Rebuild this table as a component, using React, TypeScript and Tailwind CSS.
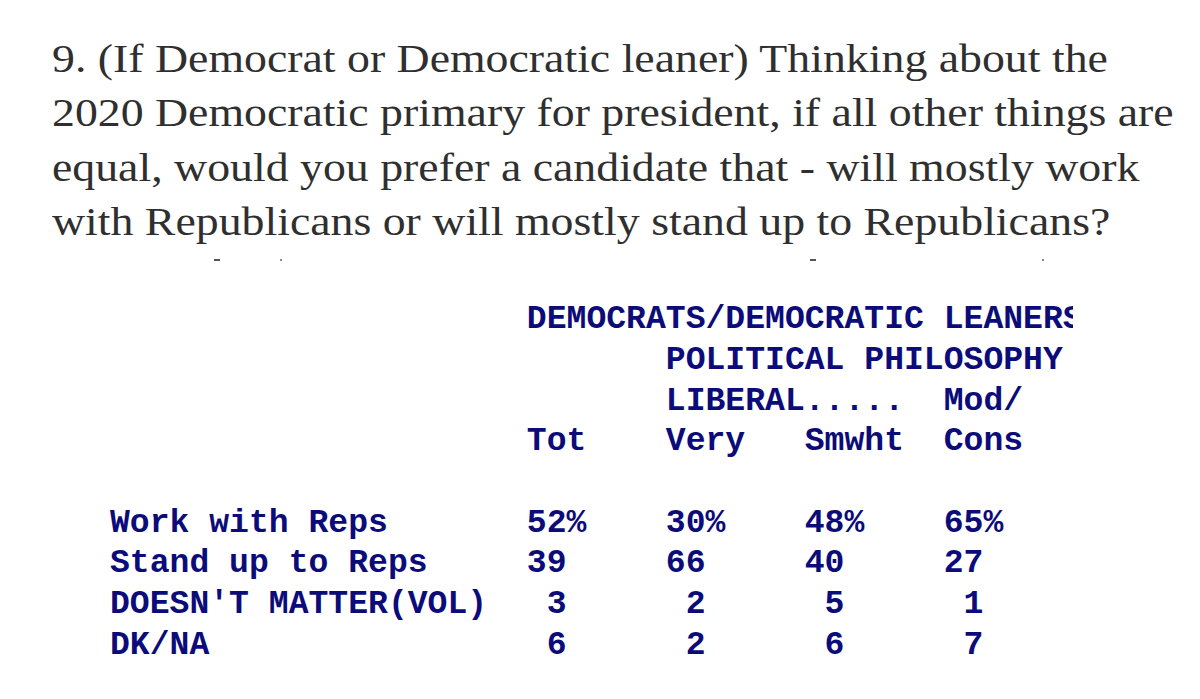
const question = [
  '9. (If Democrat or Democratic leaner) Thinking about the',
  '2020 Democratic primary for president, if all other things are',
  'equal, would you prefer a candidate that - will mostly work',
  'with Republicans or will mostly stand up to Republicans?',
];

const headerLines = [
  '                     DEMOCRATS/DEMOCRATIC LEANERS',
  '                            POLITICAL PHILOSOPHY',
  '                            LIBERAL.....  Mod/',
  '                     Tot    Very   Smwht  Cons',
];

const rowLines = [
  'Work with Reps       52%    30%    48%    65%',
  'Stand up to Reps     39     66     40     27',
  "DOESN'T MATTER(VOL)   3      2      5      1",
  'DK/NA                 6      2      6      7',
];

const mono = { fontFamily: '"Liberation Mono", "Courier New", monospace' };

export default function App() {
  return (
    <div className="w-full h-[699px] bg-white overflow-hidden">
      {/* Question text (source image is stretched horizontally) */}
      <div
        className="pl-[52px] pt-[31px] text-[41px] leading-[54.3px] text-[#2f2f2f]"
        style={{ fontFamily: '"Liberation Serif", "Times New Roman", serif' }}
      >
        {question.map((line, i) => (
          <div key={i} className="whitespace-nowrap origin-left scale-x-[1.117]">{line}</div>
        ))}
      </div>

      {/* leftover marks from a cropped line */}
      <div className="flex items-center h-[3px] mt-[10px]">
        <span className="ml-[214px] w-[6px] h-[2px] bg-[#555]"></span>
        <span className="ml-[60px] w-[2px] h-[2px] bg-[#888]"></span>
        <span className="ml-[528px] w-[6px] h-[2px] bg-[#555]"></span>
        <span className="ml-[226px] w-[2px] h-[2px] bg-[#888]"></span>
      </div>

      {/* Crosstab */}
      <div className="ml-[110px] mt-[38px] w-[963px] overflow-hidden">
        <pre className="m-0 text-[33.1px] leading-[40.7px] font-bold text-[#0b0b7a] whitespace-pre" style={mono}>
          {headerLines.join('\n')}
        </pre>
      </div>
      <div className="ml-[110px] mt-[40.7px]">
        <pre className="m-0 text-[33.1px] leading-[40.7px] font-bold text-[#0b0b7a] whitespace-pre" style={mono}>
          {rowLines.join('\n')}
        </pre>
      </div>
    </div>
  );
}
